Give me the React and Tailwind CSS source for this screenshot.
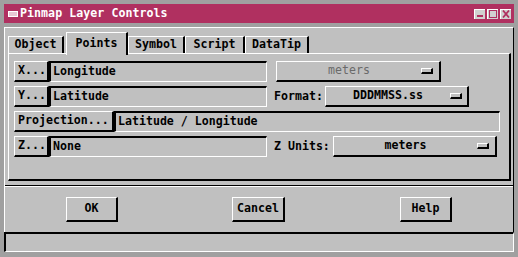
import React from 'react';

const mono = { fontFamily: '"DejaVu Sans Mono", "Liberation Mono", monospace' };

// Motif style bevels
const raised = 'border-t border-l border-t-white border-l-white border-b-2 border-r-2 border-b-black border-r-black';
const sunken = 'border-t-2 border-l-2 border-t-black border-l-black border-b border-r border-b-white border-r-white';

const PushButton = ({ label, className = '' }) => (
  <div className={`h-[21px] flex items-center pl-[3px] ${raised} ${className}`}>{label}</div>
);

const Field = ({ value, className = '' }) => (
  <div className={`h-[21px] flex items-center pl-[2px] ${sunken} ${className}`}>{value}</div>
);

const OptionMenu = ({ value, disabled, className = '', pad = 'mr-[6px]' }) => (
  <div className={`h-[21px] flex items-center ${raised} ${className}`}>
    <span className={`flex-1 text-center ${disabled ? 'text-[#6a6a6a] font-normal' : ''}`}>{value}</span>
    <span className={`w-[12px] h-[6px] border-t border-l border-white border-b-2 border-r-2 border-b-black border-r-black ${pad}`} />
  </div>
);

const Tab = ({ label, width, selected }) => (
  <div
    className={`flex items-center justify-center border-t border-l border-white border-r-2 border-r-black bg-[#c0c0c0] ${width} ${
      selected ? 'h-[23px] -mb-[2px] relative z-10 ml-[2px]' : 'h-[17px]'
    }`}
  >
    {label}
  </div>
);

const TitleButton = ({ children }) => (
  <div className="w-[11px] h-[10px] bg-[#d0d0d0] border-t border-l border-white flex items-center justify-center">
    {children}
  </div>
);

export default function App() {
  return (
    <div
      className="w-[518px] h-[257px] bg-[#a0a0a0] pt-[4px] px-[4px] pb-[5px] flex flex-col text-[11.6px] font-bold text-black leading-none"
      style={mono}
    >
      {/* Title bar */}
      <div className="h-[19px] bg-[#b03060] flex items-center text-white">
        <div className="ml-[4px] w-[10px] h-[6px] border border-white bg-[#e8c8d4]" />
        <span className="ml-[2px] tracking-[0.05px]">Pinmap Layer Controls</span>
        <div className="ml-auto mr-[3px] flex gap-[2px]">
          <TitleButton>
            <svg width="9" height="8" viewBox="0 0 9 8">
              <rect x="1" y="5" width="6" height="2" fill="#b03060" />
            </svg>
          </TitleButton>
          <TitleButton>
            <svg width="9" height="8" viewBox="0 0 9 8">
              <rect x="0.5" y="0.5" width="7" height="7" fill="none" stroke="#b03060" />
            </svg>
          </TitleButton>
          <TitleButton>
            <svg width="9" height="8" viewBox="0 0 9 8">
              <path d="M1 0.5 L7 7.5 M7 0.5 L1 7.5" stroke="#b03060" strokeWidth="1.8" />
            </svg>
          </TitleButton>
        </div>
      </div>
      <div className="h-[4px]" />

      {/* Dialog body */}
      <div className="flex-1 flex flex-col bg-[#c0c0c0] border-t border-l border-white border-r border-r-black">
        {/* Tabs */}
        <div className="mt-[4px] pl-[3px] h-[21px] flex items-end">
          <Tab label="Object" width="w-[56px]" />
          <Tab label="Points" width="w-[62px]" selected />
          <Tab label="Symbol" width="w-[57px]" />
          <Tab label="Script" width="w-[60px]" />
          <Tab label="DataTip" width="w-[64px]" />
        </div>

        {/* Tab panel */}
        <div className="ml-[3px] w-[503px] h-[128px] border-t border-l border-white border-r-2 border-b-2 border-r-black border-b-black pt-[7px] pl-[5px] flex flex-col gap-[4px]">
          <div className="flex items-center">
            <PushButton label="X..." className="w-[35px]" />
            <Field value="Longitude" className="w-[218px]" />
            <OptionMenu value="meters" disabled className="ml-[9px] w-[165px]" pad="mr-[6px]" />
          </div>
          <div className="flex items-center">
            <PushButton label="Y..." className="w-[35px]" />
            <Field value="Latitude" className="w-[218px]" />
            <span className="ml-[7px] w-[51px]">Format:</span>
            <OptionMenu value="DDDMMSS.ss" className="w-[144px]" pad="mr-[5px]" />
          </div>
          <div className="flex items-center">
            <PushButton label="Projection..." className="w-[100px]" />
            <Field value="Latitude / Longitude" className="w-[386px]" />
          </div>
          <div className="flex items-center">
            <PushButton label="Z..." className="w-[35px]" />
            <Field value="None" className="w-[218px]" />
            <span className="ml-[7px] w-[59px]">Z Units:</span>
            <OptionMenu value="meters" className="w-[164px]" pad="mr-[6px]" />
          </div>
        </div>

        {/* Separator */}
        <div className="mt-[4px] h-[2px] border-t border-t-black border-b border-b-white" />

        {/* Action buttons */}
        <div className="h-[45px] pt-[10px] flex items-start">
          <div className={`ml-[61px] w-[52px] h-[25px] flex items-center justify-center ${raised}`}>OK</div>
          <div className={`ml-[114px] w-[53px] h-[25px] flex items-center justify-center ${raised}`}>Cancel</div>
          <div className={`ml-[115px] w-[52px] h-[25px] flex items-center justify-center ${raised}`}>Help</div>
        </div>

        {/* Status bar */}
        <div className={`-mx-[1px] h-[20px] ${sunken}`} />
      </div>
    </div>
  );
}
